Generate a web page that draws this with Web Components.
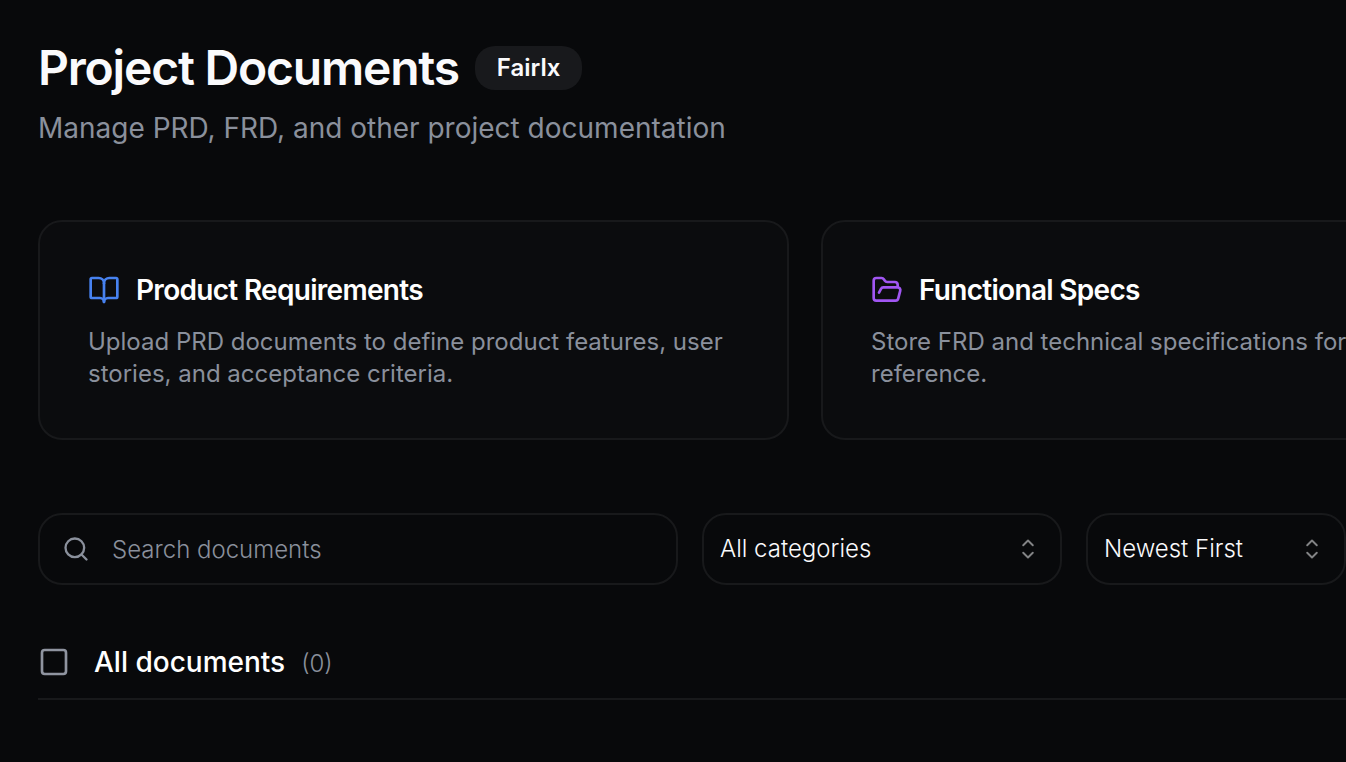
<!DOCTYPE html>
<html lang="en">
<head>
<meta charset="utf-8">
<title>Project Documents</title>
<style>
	:root {
		--bg: #08090b;
		--card: #0b0c0e;
		--border: #18191b;
		--badge: #18191c;
		--text: #fafafc;
		--muted: #8a909c;
	}
	body {
		margin: 0;
		height: 762px;
		overflow: hidden;
		background: var(--bg);
		color: var(--text);
		font-family: Inter, "Liberation Sans", sans-serif;
	}
</style>
</head>
<body>

<template id="page-header">
	<style>
		:host {
			display: block;
			height: 184px;
		}
		.row {
			display: flex;
			align-items: center;
			gap: 16px;
			height: 64px;
		}
		h1 {
			margin: 0;
			font-size: 48px;
			font-weight: 600;
			line-height: 64px;
			letter-spacing: -1.2px;
			white-space: nowrap;
		}
		p {
			margin: 8px 0 0;
			font-size: 28px;
			line-height: 40px;
			color: var(--muted);
			white-space: nowrap;
		}
	</style>
	<div class="row">
		<h1><slot></slot></h1>
		<slot name="badge"></slot>
	</div>
	<p><slot name="description"></slot></p>
</template>

<template id="name-badge">
	<style>
		:host {
			display: flex;
			align-items: center;
			box-sizing: border-box;
			height: 44px;
			padding: 0 22px;
			border-radius: 20px;
			background: var(--badge);
			font-size: 24px;
			font-weight: 600;
			line-height: 32px;
		}
	</style>
	<slot></slot>
</template>

<template id="info-card">
	<style>
		:host {
			display: block;
			box-sizing: border-box;
			height: 220px;
			padding: 48px;
			border: 2px solid var(--border);
			border-radius: 24px;
			background: var(--card);
		}
		.head {
			display: flex;
			align-items: center;
			gap: 16px;
			height: 40px;
			color: #fff;
		}
		h2 {
			margin: 0;
			font-size: 28px;
			font-weight: 600;
			line-height: 40px;
			letter-spacing: -0.7px;
			white-space: nowrap;
		}
		p {
			margin: 16px 0 0;
			font-size: 24px;
			line-height: 32px;
			color: var(--muted);
		}
	</style>
	<div class="head">
		<slot name="icon"></slot>
		<h2><slot name="title"></slot></h2>
	</div>
	<p><slot></slot></p>
</template>

<template id="line-icon">
	<style>
		:host {
			display: block;
			flex: none;
			width: 32px;
			height: 32px;
		}
		svg {
			display: block;
			width: 100%;
			height: 100%;
			fill: none;
			stroke: currentColor;
			stroke-width: 2;
			stroke-linecap: round;
			stroke-linejoin: round;
		}
	</style>
	<svg viewBox="0 0 24 24"></svg>
</template>

<template id="search-box">
	<style>
		:host {
			display: flex;
			align-items: center;
			gap: 22px;
			box-sizing: border-box;
			height: 72px;
			padding: 0 22px;
			border: 2px solid var(--border);
			border-radius: 24px;
			color: var(--muted);
			font-size: 24px;
			font-weight: 300;
		}
		line-icon {
			width: 28px;
			height: 28px;
		}
	</style>
	<line-icon name="search"></line-icon>
	<span><slot></slot></span>
</template>

<template id="select-box">
	<style>
		:host {
			display: flex;
			align-items: center;
			justify-content: space-between;
			box-sizing: border-box;
			height: 72px;
			padding: 0 16px;
			border: 2px solid var(--border);
			border-radius: 24px;
			font-size: 24px;
			font-weight: 300;
			white-space: nowrap;
		}
		span {
			padding-bottom: 2px;
		}
		line-icon {
			color: #828385;
		}
	</style>
	<span><slot></slot></span>
	<line-icon name="chevrons"></line-icon>
</template>

<template id="list-header">
	<style>
		:host {
			display: flex;
			align-items: center;
			box-sizing: border-box;
			height: 75px;
			margin-top: 40px;
			border-bottom: 2px solid var(--border);
		}
		line-icon {
			margin-right: 24px;
			color: #8f94a0;
		}
		.title {
			font-size: 28px;
			font-weight: 500;
			line-height: 40px;
			color: #fff;
		}
		.count {
			margin-left: 16px;
			padding-top: 4px;
			font-size: 24px;
			font-weight: 300;
			line-height: 32px;
			color: var(--muted);
		}
	</style>
	<line-icon name="square"></line-icon>
	<span class="title"><slot></slot></span>
	<span class="count"><slot name="count"></slot></span>
</template>

<template id="documents-page">
	<style>
		:host {
			display: block;
			box-sizing: border-box;
			height: 762px;
			padding: 36px 0 0 38px;
			overflow: hidden;
		}
		.cards {
			display: grid;
			grid-template-columns: 751px 751px;
			gap: 32px;
		}
		.filters {
			display: grid;
			grid-template-columns: 640px 360px 260px;
			gap: 24px;
			margin-top: 73px;
		}
	</style>
	<slot name="header"></slot>
	<div class="cards"><slot name="card"></slot></div>
	<div class="filters"><slot name="filter"></slot></div>
	<slot></slot>
</template>

<documents-page>
	<page-header slot="header">Project Documents<name-badge slot="badge">Fairlx</name-badge><span slot="description">Manage PRD, FRD, and other project documentation</span></page-header>

	<info-card slot="card">
		<line-icon slot="icon" name="book" style="color: #4782f0"></line-icon>
		<span slot="title">Product Requirements</span>
		Upload PRD documents to define product features, user stories, and acceptance criteria.
	</info-card>
	<info-card slot="card">
		<line-icon slot="icon" name="folder" style="color: #a156f2"></line-icon>
		<span slot="title">Functional Specs</span>
		Store FRD and technical specifications for<br>reference.
	</info-card>

	<search-box slot="filter">Search documents</search-box>
	<select-box slot="filter">All categories</select-box>
	<select-box slot="filter">Newest First</select-box>

	<list-header>All documents<span slot="count">(0)</span></list-header>
</documents-page>

<script>
const ICONS = {
	book: '<path d="M12 7v14"/><path d="M3 18a1 1 0 0 1-1-1V4a1 1 0 0 1 1-1h5a4 4 0 0 1 4 4 4 4 0 0 1 4-4h5a1 1 0 0 1 1 1v13a1 1 0 0 1-1 1h-6a3 3 0 0 0-3 3 3 3 0 0 0-3-3z"/>',
	folder: '<path d="m6 14 1.5-2.9A2 2 0 0 1 9.24 10H20a2 2 0 0 1 1.94 2.5l-1.54 6a2 2 0 0 1-1.95 1.5H4a2 2 0 0 1-2-2V5a2 2 0 0 1 2-2h3.9a2 2 0 0 1 1.69.9l.81 1.2a2 2 0 0 0 1.67.9H18a2 2 0 0 1 2 2v2"/>',
	search: '<circle cx="11" cy="11" r="8"/><path d="m21 21-4.3-4.3"/>',
	chevrons: '<path d="M8.4 9.2 12 5.6l3.6 3.6M8.4 14.8l3.6 3.6 3.6-3.6" stroke-width="1.45"/>',
	square: '<rect x="3" y="3" width="18" height="18" rx="2"/>'
}

class TemplateElement extends HTMLElement {
	constructor() {
		super();
		const shadowRoot = this.attachShadow({mode: 'open'});
		const template = document.getElementById(this.localName);
		shadowRoot.appendChild(template.content.cloneNode(true));
	}
}

class LineIcon extends TemplateElement {
	connectedCallback() {
		this.shadowRoot.querySelector('svg').innerHTML = ICONS[this.getAttribute('name')];
	}
}

customElements.define('line-icon', LineIcon);
customElements.define('name-badge', class extends TemplateElement {});
customElements.define('page-header', class extends TemplateElement {});
customElements.define('info-card', class extends TemplateElement {});
customElements.define('search-box', class extends TemplateElement {});
customElements.define('select-box', class extends TemplateElement {});
customElements.define('list-header', class extends TemplateElement {});
customElements.define('documents-page', class extends TemplateElement {});
</script>
</body>
</html>
